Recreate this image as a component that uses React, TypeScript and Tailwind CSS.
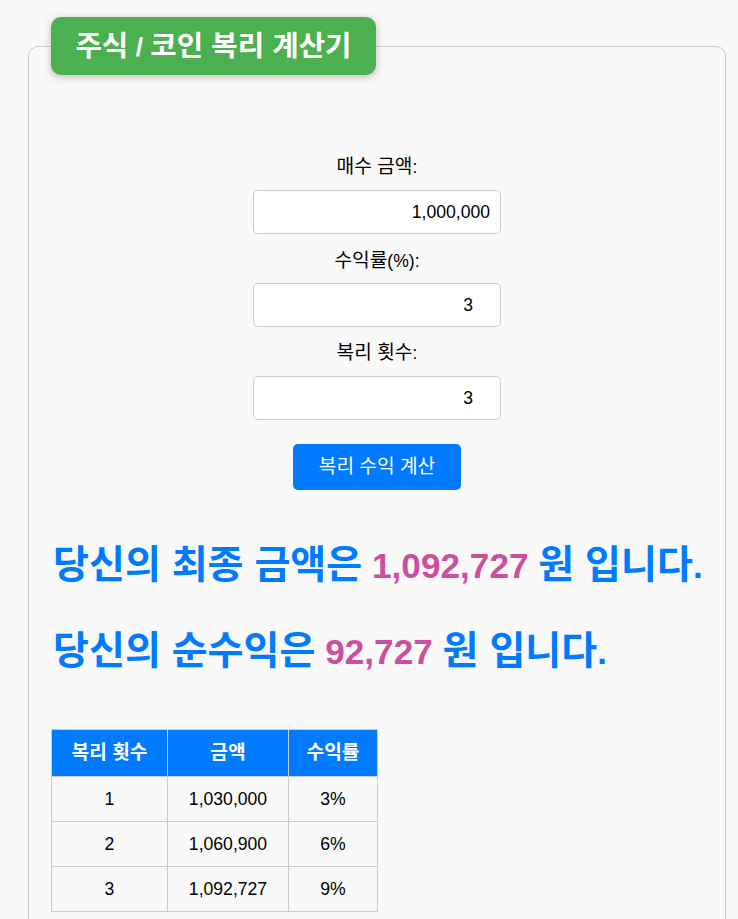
import type { ReactNode } from "react";

// Hangul in the CJK fallback is a bit narrower than in the reference, so it is scaled up a touch
function K({ children }: { children: ReactNode }) {
  return <span className="text-[1.09em]">{children}</span>;
}

function KB({ children }: { children: ReactNode }) {
  return <span className="text-[1.11em]">{children}</span>;
}

export default function App() {
  const rows = [
    { n: 1, amount: "1,030,000", rate: "3%" },
    { n: 2, amount: "1,060,900", rate: "6%" },
    { n: 3, amount: "1,092,727", rate: "9%" },
  ];

  return (
    <div className="min-h-screen bg-[#f9f9f9] pt-[46px] pl-[28px] pr-[12px] font-['Liberation_Sans','Noto_Sans_CJK_KR',sans-serif] text-black text-[17.6px]">
      <div className="relative w-[698px] border border-[#cccccc] rounded-[10px] px-[22px] pt-[110px] pb-10">
        {/* title tab sits over the top border */}
        <div className="absolute left-[22px] top-[-30px] w-[325px] h-[58px] rounded-[10px] bg-[#4caf50] shadow-[0_2px_8px_rgba(0,0,0,0.25)] flex items-center justify-center">
          <h1 className="text-white font-bold text-[26.4px] leading-[30px] whitespace-nowrap">
            <K>주식</K> / <K>코인 복리 계산기</K>
          </h1>
        </div>

        <div className="flex flex-col items-center">
          <label className="leading-[20px]">
            <K>매수 금액</K>:
          </label>
          <input
            type="text"
            defaultValue="1,000,000"
            className="mt-[13px] w-[248px] h-[44px] bg-white border border-[#cccccc] rounded-[5px] px-[10px] text-right outline-none"
          />

          <label className="mt-[17px] leading-[20px]">
            <K>수익률</K>(%):
          </label>
          <input
            type="text"
            defaultValue="3"
            className="mt-[12px] w-[248px] h-[44px] bg-white border border-[#cccccc] rounded-[5px] pl-[11px] pr-[27px] text-right outline-none"
          />

          <label className="mt-[16px] leading-[20px]">
            <K>복리 횟수</K>:
          </label>
          <input
            type="text"
            defaultValue="3"
            className="mt-[13px] w-[248px] h-[44px] bg-white border border-[#cccccc] rounded-[5px] pl-[11px] pr-[27px] text-right outline-none"
          />

          <button className="mt-[24px] w-[168px] h-[46px] bg-[#007bff] text-white rounded-[5px] leading-[20px]">
            <K>복리 수익 계산</K>
          </button>
        </div>

        <h2 className="mt-[53px] pl-[2px] text-[35.2px] leading-[44px] font-bold text-[#007bff] whitespace-nowrap">
          <KB>당신의 최종 금액은</KB> <span className="text-[#cc4f9f]">1,092,727</span> <KB>원 입니다</KB>.
        </h2>
        <h2 className="mt-[41px] pl-[2px] text-[35.2px] leading-[44px] font-bold text-[#007bff] whitespace-nowrap">
          <KB>당신의 순수익은</KB> <span className="text-[#cc4f9f]">92,727</span> <KB>원 입니다</KB>.
        </h2>

        <table className="mt-[55px] border-collapse">
          <thead>
            <tr className="bg-[#007bff] text-white">
              <th className="w-[116px] h-[47px] border border-[#cccccc] font-bold">
                <K>복리 횟수</K>
              </th>
              <th className="w-[121px] h-[47px] border border-[#cccccc] font-bold">
                <K>금액</K>
              </th>
              <th className="w-[89px] h-[47px] border border-[#cccccc] font-bold">
                <K>수익률</K>
              </th>
            </tr>
          </thead>
          <tbody>
            {rows.map((r) => (
              <tr key={r.n}>
                <td className="h-[45px] border border-[#cccccc] text-center">{r.n}</td>
                <td className="h-[45px] border border-[#cccccc] text-center">{r.amount}</td>
                <td className="h-[45px] border border-[#cccccc] text-center">{r.rate}</td>
              </tr>
            ))}
          </tbody>
        </table>
      </div>
    </div>
  );
}
